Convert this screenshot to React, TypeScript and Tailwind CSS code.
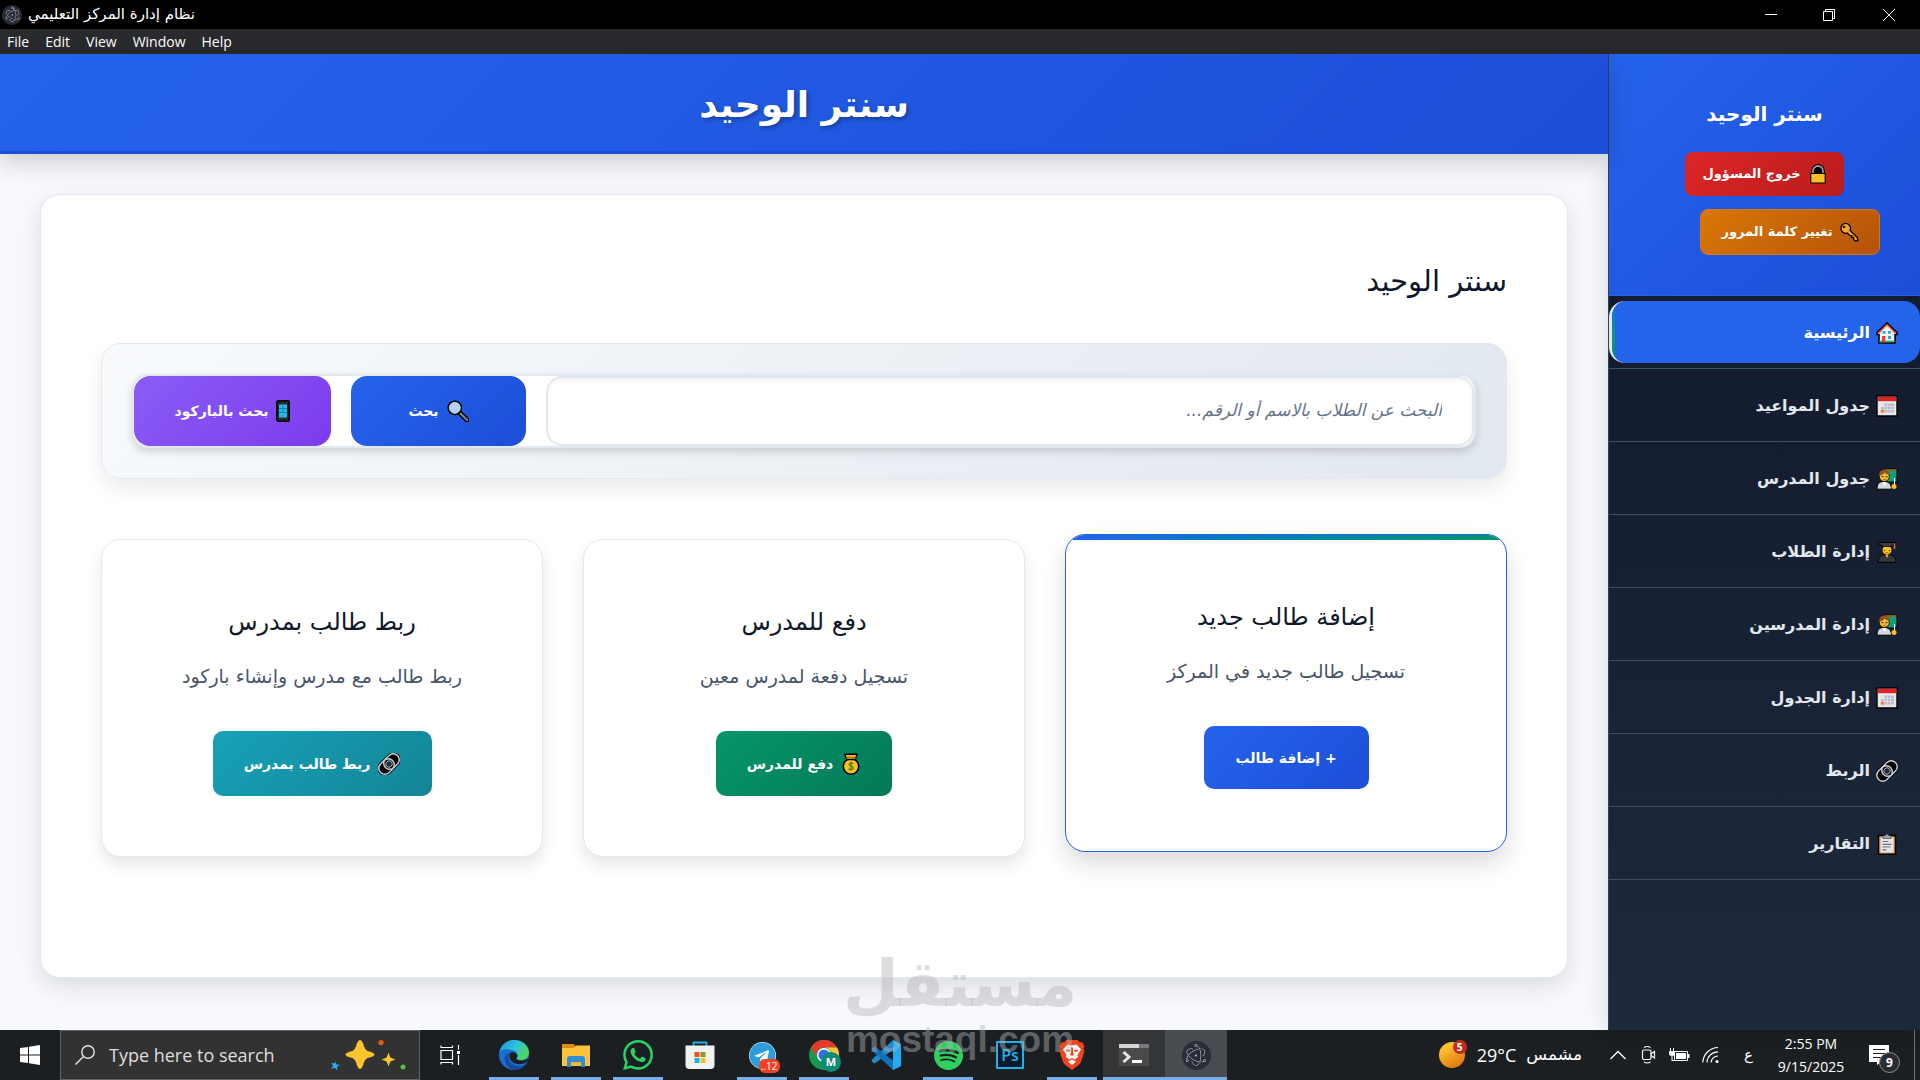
import { useState } from "react";
import type { ReactNode } from "react";
import { FaTelegram } from "react-icons/fa";
import { SiElectron, SiSpotify, SiWhatsapp } from "react-icons/si";

type IconProps = { className?: string };

const HouseIcon = ({ className }: IconProps) => (
  <svg viewBox="0 0 22 22" className={className}>
    <path d="M11 1 1 10.500v2h2V21h16v-8.500h2v-2z" fill="#f3f4f6" stroke="#000" strokeWidth="1.600" />
    <path d="M11 2.500 2.500 11M11 2.500 19.500 11" stroke="#e8432a" strokeWidth="1.600" fill="none" />
    <path d="M3.500 20h15v-1.500h-15z" fill="#22c55e" />
    <path d="M6 14h3.200v6H6z" fill="#e8432a" />
    <path d="M6.500 9h3v2.800h-3zM12 9h3v2.800h-3zM12 14h3v3h-3z" fill="#2ea8e0" />
  </svg>
);

const CalendarIcon = ({ className }: IconProps) => (
  <svg viewBox="0 0 22 22" className={className}>
    <path d="M1 1h20v20H1z" fill="#e5e7eb" stroke="#000" strokeWidth="1.400" />
    <path d="M1.700 1.700h18.600v4.500H1.700z" fill="#dc2626" />
    <path d="M8 8.500h10v9H5v-6h3z" fill="#b8bcc2" />
    <path d="M5 11.500h13M5 14.500h13M8 8.500v9M11.300 8.500v9M14.600 8.500v9" stroke="#e5e7eb" strokeWidth=".7" />
    <path d="M4.800 14.600h3v3h-3z" fill="#ea7a3c" />
  </svg>
);

const TeacherIcon = ({ className }: IconProps) => (
  <svg viewBox="0 0 22 22" className={className}>
    <path d="M10 1h11v13H10z" fill="#0f9f7d" stroke="#000" strokeWidth="1.200" />
    <path d="M9 2h11.500" stroke="#a16207" strokeWidth="1.600" />
    <path d="M1 21.200c0-5 2-7.700 7-7.700s7.500 3 7.500 7.700z" fill="#d4d7dc" stroke="#000" strokeWidth="1" />
    <path d="m6.500 14 2 4 2-4z" fill="#fff" />
    <circle cx="8.300" cy="8.500" r="5" fill="#fbbf24" stroke="#000" strokeWidth=".8" />
    <path d="M3.200 8C3 3 5.500 1.600 9 1.700c3 .2 4.500 2 4.500 4.800-2 0-4-.6-5-2C7.500 6.500 5.500 7 3.200 8z" fill="#92531f" />
    <path d="M5.500 8.600h2M9.500 8.600h2" stroke="#3f3f46" strokeWidth="1.300" />
    <path d="M7 11.300h3" stroke="#b45309" strokeWidth=".9" />
    <path d="M18.500 10v9" stroke="#fff" strokeWidth="1" />
    <circle cx="18" cy="18.500" r="2.500" fill="#fbbf24" />
  </svg>
);

const StudentIcon = ({ className }: IconProps) => (
  <svg viewBox="0 0 22 22" className={className}>
    <path d="M2 21.300c0-5 3-8 9-8s9 3 9 8z" fill="#383838" stroke="#000" strokeWidth="1" />
    <circle cx="11" cy="9" r="5" fill="#fbbf24" stroke="#000" strokeWidth=".8" />
    <path d="M9.500 13.500h3L11 17z" fill="#fbbf24" />
    <path d="M2.500 1.500h17V4H16v2c-3-1-7-1-10 0V4H2.500z" fill="#404040" stroke="#000" strokeWidth="1" />
    <path d="M18.500 2.500v5.500" stroke="#d9772b" strokeWidth="1.500" />
    <path d="M8.500 9v1M13.500 9v1" stroke="#222" strokeWidth="1.200" />
    <path d="M9.500 11.700h3" stroke="#b45309" strokeWidth=".9" />
  </svg>
);

const LinkIcon = ({ className }: IconProps) => (
  <svg viewBox="0 0 22 22" className={className}>
    <g transform="rotate(-45 11 11)">
      <rect x="-1" y="5" width="24" height="12" rx="6" fill="#000" stroke="#000" strokeWidth="3" />
      <rect x="-1" y="5" width="17" height="12" rx="6" fill="none" stroke="#c9cdd3" strokeWidth="1.500" />
      <rect x="6" y="5" width="17" height="12" rx="6" fill="none" stroke="#c9cdd3" strokeWidth="1.500" />
      <circle cx="11" cy="11" r="3.200" fill="#1e293b" stroke="#c9cdd3" strokeWidth=".8" />
    </g>
  </svg>
);

const ClipboardIcon = ({ className }: IconProps) => (
  <svg viewBox="0 0 22 22" className={className}>
    <path d="M2.500 2.500h17v18.700h-17z" fill="#d98b56" stroke="#000" strokeWidth="1.400" />
    <path d="M4.500 4.500h13v15h-13z" fill="#e5e7eb" />
    <path d="M7 5.500v-3h2.500a1.500 1.500 0 0 1 3 0H15v3z" fill="#9ca3af" stroke="#333" strokeWidth=".6" />
    <path d="M6.500 8.500h6M6.500 11.300h9M6.500 14h8M6.500 16.800h4" stroke="#6b7280" strokeWidth="1.200" />
  </svg>
);

const LockIcon = ({ className }: IconProps) => (
  <svg viewBox="0 0 20 22" className={className}>
    <path d="M4.500 11V7.500a5.500 5.500 0 0 1 11 0V11" fill="#000" stroke="#000" strokeWidth="4" />
    <path d="M4.500 11V7.500a5.500 5.500 0 0 1 11 0V11" fill="#000" stroke="#9ca3af" strokeWidth="1.800" />
    <path d="M2 10.500h16v10.500H2z" fill="#fbbf24" stroke="#000" strokeWidth="1.200" />
  </svg>
);

const KeyIcon = ({ className }: IconProps) => (
  <svg viewBox="0 0 22 22" className={className}>
    <path
      d="M7 1.500a5.500 5.500 0 1 0 2.300 10.700L12 15h2v2h2v2l1.500 1.700h3v-3L12.200 9.300A5.500 5.500 0 0 0 7 1.500z"
      fill="#f5a623"
      stroke="#000"
      strokeWidth="1.500"
    />
    <circle cx="5.500" cy="5.500" r="1.500" fill="#1f1300" />
  </svg>
);

const SearchIcon = ({ className }: IconProps) => (
  <svg viewBox="0 0 22 22" className={className}>
    <path d="m12.500 12.500 7.500 7.500" stroke="#000" strokeWidth="5" strokeLinecap="round" />
    <path d="m13.500 13.500 6.500 6.500" stroke="#7c8087" strokeWidth="2.400" strokeLinecap="round" />
    <circle cx="7.800" cy="7.800" r="6.500" fill="#a9cdf6" stroke="#000" strokeWidth="1.800" />
    <circle cx="7.800" cy="7.800" r="5.400" fill="none" stroke="#cbd5e1" strokeWidth="1" />
    <path d="m4.500 9 4.500-4.500M6.500 11 11 6.500" stroke="#dbeafe" strokeWidth="1" />
  </svg>
);

const PhoneIcon = ({ className }: IconProps) => (
  <svg viewBox="0 0 14 22" className={className}>
    <rect x=".8" y=".8" width="12.400" height="20.400" rx="1.500" fill="#27272a" stroke="#000" strokeWidth="1.400" />
    <path d="M3 4.500h8v13H3z" fill="#22b8e6" />
    <path d="M3 8.500h8M3 12.500h8M7 4.500v8" stroke="#0c7ea6" strokeWidth=".9" />
  </svg>
);

const MoneyIcon = ({ className }: IconProps) => (
  <svg viewBox="0 0 20 22" className={className}>
    <circle cx="10" cy="13.500" r="7.700" fill="#fbbf24" stroke="#000" strokeWidth="1.500" />
    <path d="M4 1.200h12l-1.500 5.300h-9z" fill="#fbbf24" stroke="#000" strokeWidth="1.400" />
    <path d="M4.500 4.300h11" stroke="#a85b12" strokeWidth="1.100" />
    <path
      d="M12.300 10.800c-.6-.9-4.300-1.300-4.300.8 0 2 4.400 1.400 4.400 3.500 0 2.200-4 1.800-4.800.6M10.100 8.800v9"
      stroke="#4d7c0f"
      strokeWidth="1.200"
      fill="none"
    />
  </svg>
);

const EdgeIcon = () => (
  <svg viewBox="0 0 30 30" className="size-[30px]">
    <defs>
      <linearGradient id="edge-top" x1="0" y1="0" x2="1" y2="0.500">
        <stop offset="0" stopColor="#1593d8" />
        <stop offset=".55" stopColor="#2fc1df" />
        <stop offset="1" stopColor="#4fd65f" />
      </linearGradient>
    </defs>
    <circle cx="15" cy="15" r="15" fill="#1b6fd0" />
    <path d="M.3 13C1.500 5 8 0 15 0c9 0 15 6 15 12.500 0 5-4 7.500-8 7.500-3 0-5-1-4.500-2.300 2-2.500.5-7.700-5.500-7.700C6 8.500 1.500 9.500.3 13z" fill="url(#edge-top)" />
    <path d="M11 13c-3.500 4-1 12 8 13 4 .4 7-1 8.500-3.300C25 28 20.500 30 15.500 30 9 29.500 4.500 22 6 17c1-3 3-4 5-4z" fill="#174a9c" />
    <path d="M11.500 12.500c-2.500 3.500-.5 10.500 6.500 11.500 5 .6 8.500-1 9.800-2.300.7-.5 1 .1.700.6-1.500 2.500-.5.500 1.500-4.300-3 2.500-9.500 3.500-12.300 1.500-1.200-.9.800-1.500.8-3.500 0-2-2.500-4.500-7-3.500z" fill="#1b1f22" />
  </svg>
);

const FolderIcon = () => (
  <svg viewBox="0 0 28 24" className="w-7 h-6">
    <path d="M0 1h12l2 3v5H0z" fill="#d98a0f" />
    <path d="M0 5h12l2-2.500h14V23H0z" fill="#fcc43c" />
    <path d="M5 24v-8q0-3 3-3h12q3 0 3 3v8h-4v-5H9v5z" fill="#2f8fd6" />
    <path d="M9 19h10v3H9z" fill="#f4b62c" />
  </svg>
);

const StoreIcon = () => (
  <svg viewBox="0 0 30 30" className="size-[30px]">
    <path d="M8.500 7V2.500h13V7" fill="none" stroke="#1fb2e8" strokeWidth="1.800" />
    <path d="M.5 5.500h29V25q0 4-4 4h-21q-4 0-4-4z" fill="#f1f1f1" />
    <path d="M9.500 12h5v5h-5z" fill="#f04e23" />
    <path d="M15.500 12h5v5h-5z" fill="#8f9a26" />
    <path d="M9.500 18h5v5h-5z" fill="#1fb2e8" />
    <path d="M15.500 18h5v5h-5z" fill="#fcc221" />
  </svg>
);

const ChromeIcon = () => (
  <svg viewBox="0 0 30 30" className="size-[30px]">
    <circle cx="15" cy="15" r="15" fill="#139a52" />
    <path d="M2 7.500A15 15 0 0 1 28 7.500H15A7.500 7.500 0 0 0 8.500 18.700z" fill="#e5392a" />
    <path d="M28 7.500A15 15 0 0 1 15 30l6.500-11.300A7.500 7.500 0 0 0 15 7.500z" fill="#fcc62f" />
    <circle cx="15" cy="15" r="7" fill="#fff" />
    <circle cx="15" cy="15" r="5.600" fill="#2f73e8" />
  </svg>
);

const VsCodeIcon = () => (
  <svg viewBox="0 0 30 30" className="size-[30px]">
    <path d="M22 0 1 19.500q-1 1 0 2l1.500 1.500q1 .8 2 0L22 9.500z" fill="#2489ca" />
    <path d="M22 30 1 10.500q-1-1 0-2L2.500 7q1-.8 2 0L22 20.500z" fill="#1070b3" />
    <path d="M22 0l7 3.200q1 .6 1 1.600v20.400q0 1-1 1.600L22 30z" fill="#24aaf0" />
  </svg>
);

const PhotoshopIcon = () => (
  <span className="flex size-7 items-center justify-center border-2 border-[#1fb2e8] bg-[#0a1a2c] font-['Open_Sans',sans-serif] text-base font-semibold text-[#1fb2e8]">
    Ps
  </span>
);

const BraveIcon = () => (
  <svg viewBox="0 0 26 30" className="h-[30px] w-[26px]">
    <path d="M7.500 0h11l2.500 2.500L23 2l2.500 4-1 2.500L25.500 11 22 22q-.8 2-2.500 3L13 30l-6.500-5q-1.700-1-2.500-3L.5 11l1-2.500L.5 6 3 2l2 .5z" fill="#f4441e" />
    <path d="M9 4.500 13 5.500l4-1 2 1.500 3 3.500-3.500 5.500.5 2-3.500 2.500L13 18l-2.500 1.500L7 17l.5-2L4 9.500 7 6z" fill="#fff" />
    <path d="M13 19.500l4 2.200-4 3.300-4-3.300z" fill="#fff" />
    <path d="M6.500 9.500 11 10l-.5 2-2.500-.5zM19.500 9.500 15 10l.5 2 2.500-.5zM12 7l1 1 1-1v6l1.500 1-2.500 2-2.500-2L12 13z" fill="#f4441e" />
  </svg>
);

const TerminalIcon = () => (
  <svg viewBox="0 0 30 24" className="w-[30px] h-6">
    <path d="M0 1h30v22H0z" fill="#494a4c" />
    <path d="M0 1h20v4H0z" fill="#d4d4d4" />
    <path d="M20 1h10v4H20z" fill="#77797c" />
    <path d="m4.500 9 5.500 5-5.500 5" fill="none" stroke="#e5e5e5" strokeWidth="3" />
    <path d="M13 18.500h10" stroke="#fff" strokeWidth="3" />
  </svg>
);

const ElectronBadge = ({ className }: IconProps) => (
  <span className={`flex items-center justify-center rounded-full bg-[#292d38] text-[#c5ccd3] ${className}`}>
    <SiElectron className="size-3/4" />
  </span>
);

const navItems = [
  { label: "الرئيسية", Icon: HouseIcon },
  { label: "جدول المواعيد", Icon: CalendarIcon },
  { label: "جدول المدرس", Icon: TeacherIcon },
  { label: "إدارة الطلاب", Icon: StudentIcon },
  { label: "إدارة المدرسين", Icon: TeacherIcon },
  { label: "إدارة الجدول", Icon: CalendarIcon },
  { label: "الربط", Icon: LinkIcon },
  { label: "التقارير", Icon: ClipboardIcon },
];

const TitleBar = () => (
  <div className="flex h-[29px] items-center justify-between bg-black text-white">
    <div className="flex items-center gap-1.5 pl-0.5">
      <ElectronBadge className="size-5" />
      <span dir="rtl" className="text-[15px]">نظام إدارة المركز التعليمي</span>
    </div>
    <div className="flex h-full pr-1">
      <button aria-label="Minimize" className="flex w-[58px] items-center justify-center">
        <svg viewBox="0 0 12 12" className="size-3"><path d="M0 5.500h12" stroke="#fff" /></svg>
      </button>
      <button aria-label="Restore" className="flex w-[58px] items-center justify-center">
        <svg viewBox="0 0 12 12" className="size-3" fill="none" stroke="#fff">
          <path d="M.5 2.500h9v9h-9zM2.500 2.500v-2h9v9h-2" />
        </svg>
      </button>
      <button aria-label="Close" className="flex w-[58px] items-center justify-center pl-1">
        <svg viewBox="0 0 12 12" className="size-3"><path d="m0 0 12 12M12 0 0 12" stroke="#fff" /></svg>
      </button>
    </div>
  </div>
);

const MenuBar = () => (
  <div className="flex h-[25px] items-center gap-4 bg-[#292a2d] pl-[7px] font-['Open_Sans',sans-serif] text-sm text-white">
    {["File", "Edit", "View", "Window", "Help"].map((name) => (
      <button key={name}>{name}</button>
    ))}
  </div>
);

const Sidebar = () => {
  const [active, setActive] = useState(0);

  return (
    <aside className="relative z-10 flex w-[312px] shrink-0 flex-col border-l border-[#334155] bg-linear-to-b from-[#0f172a] to-[#1e293b] shadow-[-4px_0_20px_rgba(0,0,0,0.1)]">
      <div className="flex flex-col items-center border-b border-[#2563eb] bg-linear-135 from-[#2563eb] to-[#1d4ed8] px-10 pt-9 pb-10 text-white">
        <h2 className="text-xl leading-12 font-bold">سنتر الوحيد</h2>
        <button className="mt-3.5 flex h-11 w-[159px] items-center justify-center gap-2 rounded-lg bg-linear-135 from-[#dc2626] to-[#b91c1c] text-[13px] font-bold">
          <LockIcon className="h-5 w-[18px]" />
          خروج المسؤول
        </button>
        <button className="mt-[13px] flex h-[46px] w-[180px] items-center justify-center gap-1.5 self-start rounded-lg border border-[#d97706] bg-linear-135 from-[#d97706] to-[#b45309] text-[13px] font-bold">
          <KeyIcon className="size-5" />
          تغيير كلمة المرور
        </button>
      </div>
      <nav>
        {navItems.map(({ label, Icon }, i) => (
          <div key={label} className="flex h-[73px] flex-col border-b border-[#3a5068] py-[5px]">
            <a
              href="#"
              onClick={() => setActive(i)}
              className={
                i === active
                  ? "relative flex flex-1 items-center gap-1.5 overflow-hidden rounded-2xl border-l-3 border-[#e2e8f0] bg-[#2563eb] pt-0.5 pr-[22px] text-base font-bold text-white"
                  : "flex flex-1 items-center gap-1.5 pt-0.5 pr-[22px] text-base font-bold text-[#e2e8f0]"
              }
            >
              {i === active && (
                <span className="absolute inset-y-0 left-0 w-[3px] bg-linear-to-b from-[#2563eb] via-[#0d9488] to-[#059669]" />
              )}
              <Icon className="size-[22px]" />
              {label}
            </a>
          </div>
        ))}
      </nav>
    </aside>
  );
};

const SearchForm = () => {
  const [query, setQuery] = useState("");

  return (
    <div className="rounded-[20px] border border-[#e2e8f0] bg-linear-135 from-[#f8fafc] to-[#e2e8f0] p-[30px] shadow-[0_10px_20px_rgba(0,0,0,0.08)]">
      <form
        onSubmit={(e) => e.preventDefault()}
        className="flex h-[74px] gap-5 rounded-2xl border-2 border-[#e2e8f0] bg-white shadow-[0_4px_8px_rgba(0,0,0,0.15)]"
      >
        <input
          type="text"
          aria-label="البحث عن الطلاب"
          placeholder="البحث عن الطلاب بالاسم أو الرقم..."
          value={query}
          onChange={(e) => setQuery(e.target.value)}
          className="min-w-0 flex-1 rounded-2xl border-2 border-[#e2e8f0] bg-white px-[30px] text-[17px] shadow-[inset_0_2px_4px_rgba(0,0,0,0.06)] outline-none placeholder:text-[#64748b] placeholder:italic"
        />
        <button
          type="submit"
          className="flex w-[175px] items-center justify-center gap-2 rounded-2xl bg-linear-135 from-[#2563eb] to-[#1d4ed8] text-sm font-bold text-white"
        >
          <SearchIcon className="size-[22px]" />
          بحث
        </button>
        <button
          type="button"
          className="flex w-[197px] items-center justify-center gap-2 rounded-2xl bg-linear-135 from-[#8b5cf6] to-[#7c3aed] text-sm font-bold text-white"
        >
          <PhoneIcon className="h-[22px] w-3.5" />
          بحث بالباركود
        </button>
      </form>
    </div>
  );
};

type CardProps = {
  title: string;
  text: string;
  className: string;
  children: ReactNode;
};

const ActionCard = ({ title, text, className, children }: CardProps) => (
  <div className={`flex flex-col items-center rounded-[20px] border bg-white py-15 ${className}`}>
    <h3 className="text-2xl leading-11 text-[#0f172a]">{title}</h3>
    <p className="mt-3.5 mb-[37px] text-[19px] leading-9 text-[#475569]">{text}</p>
    {children}
  </div>
);

const Dashboard = () => (
  <div className="flex min-w-0 flex-1 flex-col bg-[#f8f9fd]">
    <header className="relative z-10 flex h-[100px] items-center justify-center border-b-3 border-[#1d4ed8] bg-linear-135 from-[#2563eb] to-[#1d4ed8] pt-1 shadow-[0_8px_24px_rgba(0,0,0,0.18)]">
      <h1 className="text-4xl font-bold text-white text-shadow-[2px_2px_4px_rgba(0,0,0,0.3)]">سنتر الوحيد</h1>
    </header>
    <main className="flex flex-1 flex-col p-10 pb-13">
      <section className="flex-1 rounded-[20px] border border-[#e2e8f0] bg-white px-15 pt-15 pb-30 shadow-[0_8px_24px_rgba(0,0,0,0.12)]">
        <h2 className="mb-9 text-[29px] leading-13 text-[#0f172a]">سنتر الوحيد</h2>
        <SearchForm />
        <div className="mt-15 grid grid-cols-3 gap-10">
          <ActionCard
            title="إضافة طالب جديد"
            text="تسجيل طالب جديد في المركز"
            className="relative -translate-y-[5px] overflow-hidden border-[#2563eb] shadow-[0_12px_24px_rgba(0,0,0,0.14)] before:absolute before:inset-x-0 before:top-0 before:h-[5px] before:bg-linear-to-r before:from-[#2563eb] before:to-[#059669]"
          >
            <button className="h-[63px] w-[165px] rounded-[10px] bg-linear-135 from-[#2563eb] to-[#1d4ed8] text-sm font-bold text-white">
              + إضافة طالب
            </button>
          </ActionCard>
          <ActionCard
            title="دفع للمدرس"
            text="تسجيل دفعة لمدرس معين"
            className="border-[#e2e8f0] shadow-[0_8px_16px_rgba(0,0,0,0.1)]"
          >
            <button className="flex h-[65px] w-[176px] items-center justify-center gap-2 rounded-[10px] bg-linear-135 from-[#059669] to-[#047857] text-sm font-bold text-white">
              <MoneyIcon className="h-[22px] w-5" />
              دفع للمدرس
            </button>
          </ActionCard>
          <ActionCard
            title="ربط طالب بمدرس"
            text="ربط طالب مع مدرس وإنشاء باركود"
            className="border-[#e2e8f0] shadow-[0_8px_16px_rgba(0,0,0,0.1)]"
          >
            <button className="flex h-[65px] w-[219px] items-center justify-center gap-2 rounded-[10px] bg-linear-135 from-[#17a2b8] to-[#138496] text-sm font-bold text-white">
              <LinkIcon className="size-[22px]" />
              ربط طالب بمدرس
            </button>
          </ActionCard>
        </div>
      </section>
    </main>
  </div>
);

const taskbarApps: { name: string; icon: ReactNode; running?: boolean; cell?: string }[] = [
  { name: "Edge", icon: <EdgeIcon />, running: true },
  { name: "File Explorer", icon: <FolderIcon />, running: true },
  { name: "WhatsApp", icon: <SiWhatsapp className="size-[30px] text-[#25d366]" />, running: true },
  { name: "Store", icon: <StoreIcon /> },
  {
    name: "Telegram",
    icon: (
      <span className="relative">
        <FaTelegram className="size-[27px] rounded-full bg-white text-[#2a9fdc]" />
        <span className="absolute -right-1 -bottom-1 rounded-md bg-[#f04124] px-0.5 text-[10px] leading-[14px] text-white">..12</span>
      </span>
    ),
    running: true,
  },
  {
    name: "Chrome",
    icon: (
      <span className="relative">
        <ChromeIcon />
        <span className="absolute -right-0.5 -bottom-0.5 flex size-5 items-center justify-center rounded-full bg-[#0f8a74] text-[11px] font-bold text-white">M</span>
      </span>
    ),
    running: true,
  },
  { name: "VS Code", icon: <VsCodeIcon /> },
  { name: "Spotify", icon: <SiSpotify className="size-[29px] text-[#2ed15f]" />, running: true },
  { name: "Photoshop", icon: <PhotoshopIcon /> },
  { name: "Brave", icon: <BraveIcon />, running: true },
  { name: "Terminal", icon: <TerminalIcon />, running: true, cell: "bg-[#333536]" },
  { name: "Electron", icon: <ElectronBadge className="size-[29px]" />, running: true, cell: "bg-[#484c50]" },
];

const Taskbar = () => (
  <footer className="flex h-[50px] items-stretch bg-[#1b1f22] font-['Open_Sans',sans-serif] text-white">
    <button aria-label="Start" className="flex w-15 items-center justify-center">
      <svg viewBox="0 0 20 20" className="size-5" fill="#fff">
        <path d="M0 3l8-1v7.500H0zM9 1.800 20 0v9.500H9zM0 10.500h8V18l-8-1zM9 10.500h11V20L9 18.300z" />
      </svg>
    </button>
    <div className="flex w-[360px] items-center border border-[#606468] bg-[#323232] pl-3.5">
      <svg viewBox="0 0 20 20" className="size-5" fill="none" stroke="#e5e5e5" strokeWidth="1.400">
        <circle cx="13" cy="7" r="6.200" />
        <path d="M8.500 11.500.5 19.500" />
      </svg>
      <input
        type="text"
        aria-label="Search"
        placeholder="Type here to search"
        className="ml-3.5 w-[200px] text-lg outline-none placeholder:text-[#dedede]"
      />
      <svg viewBox="0 0 76 32" className="ml-[21px] h-8 w-[76px]">
        <path d="M30 1q2.500 0 4 6.500 1 3 3.500 4.500 7 1.500 7 3.500t-7 3.500q-2.500 1.500-3.500 4Q32.500 30 30 30t-4-7q-1-2.500-3.500-4-7-1.500-7-3.500t7-3.500Q25 10.500 26 7.500 27.500 1 30 1z" fill="#fcc42f" />
        <path d="M58.500 13.500q1.500 4.500 2 5 .5.600 5 2-4.500 1.500-5 2-.5.500-2 5-1.500-4.500-2-5-.5-.5-5-2 4.500-1.400 5-2 .5-.5 2-5z" fill="#fcc42f" />
        <path d="M5 21.500q1 3.500 1.500 4 .5.300 4 .2-3 1.500-3.300 2-.4.800.2 4-2-2.500-2.500-2.700-.8 0-4 1 2-2.500 2-3.300-.1-.5-1.500-3 3 .9 3.500.6.300-.4.100-2.800z" fill="#22b1f0" />
        <circle cx="51" cy="3.500" r="2.600" fill="#e8590c" />
        <circle cx="73" cy="28" r="2.500" fill="#57c04a" />
      </svg>
    </div>
    <button aria-label="Task View" className="flex w-[63px] items-center justify-center pr-1">
      <svg viewBox="0 0 20 20" className="size-5" fill="none" stroke="#fff" strokeWidth="1.200">
        <path d="M1 5.500h11.500v9H1zM1 .5v2h11.500v-2M1 19.500v-2h11.500v2M18.500 0v4.500M18.500 10v10" />
        <path d="M17 6h3v3h-3z" fill="#fff" stroke="none" />
      </svg>
    </button>
    {taskbarApps.map(({ name, icon, running, cell }) => (
      <button key={name} aria-label={name} className={`relative flex w-[62px] items-center justify-center ${cell ?? ""}`}>
        {icon}
        {running && (
          <span className={cell ? "absolute inset-x-0 bottom-0 h-[3px] bg-[#76adeb]" : "absolute inset-x-1.5 bottom-0 h-[3px] bg-[#76adeb]"} />
        )}
      </button>
    ))}

    <div className="ml-auto flex items-center pr-[5px]">
      <span className="relative mr-3 flex">
        <svg viewBox="0 0 26 26" className="size-[26px]">
          <defs>
            <linearGradient id="sun" x1="0" y1="0" x2=".6" y2="1">
              <stop offset=".3" stopColor="#fbc02d" />
              <stop offset="1" stopColor="#e07a10" />
            </linearGradient>
          </defs>
          <circle cx="13" cy="13" r="13" fill="url(#sun)" />
        </svg>
        <span className="absolute -top-0.5 -right-0.5 flex size-3.5 items-center justify-center rounded-full bg-[#c42b1c] text-[10px] font-bold">5</span>
      </span>
      <span className="mr-2.5 text-lg">29°C</span>
      <span className="mr-7 font-['DejaVu_Sans',sans-serif] text-[17px]">مشمس</span>
      <svg viewBox="0 0 16 10" className="mr-[15px] h-2.5 w-4" fill="none" stroke="#fff" strokeWidth="1.300">
        <path d="m.5 9 7.500-7.500L15.500 9" />
      </svg>
      <svg viewBox="0 0 16 20" className="mr-3 h-5 w-4" fill="none" stroke="#fff" strokeWidth="1.200">
        <rect x="1.500" y="5" width="8.500" height="9.500" rx="1.500" />
        <path d="M10 9l3.500-2.500v6.500L10 10.500M3 2.500q3-2 6.500 0M3 17q3 2 6.500 0" />
      </svg>
      <svg viewBox="0 0 21 14" className="mr-3 h-3.5 w-[21px]">
        <path d="M5.500 3.500h13v9h-13z" fill="none" stroke="#fff" />
        <path d="M7 5h10v6H7zM19 6h1.500v4H19zM0 3h6v2.500Q6 8 3 8T0 5.500zM1 0h1v3H1zM4 0h1v3H4zM2.500 7.500h1V12h3v1h-4z" fill="#fff" />
      </svg>
      <svg viewBox="0 0 18 18" className="mr-6 size-[18px]" fill="none" stroke="#fff" strokeWidth="1.200">
        <path d="M.8 16.500A15.500 15.500 0 0 1 16 1.500M5 16.500A11 11 0 0 1 16 5.800M9 16.500a7 7 0 0 1 7-6.500" />
        <circle cx="15" cy="15.500" r="1.500" fill="#fff" stroke="none" />
      </svg>
      <span className="mr-5 font-['DejaVu_Sans',sans-serif] text-[15px]">ع</span>
      <div className="mr-5 w-[76px] text-center text-sm leading-[23px] whitespace-nowrap">
        <div>2:55 PM</div>
        <div>9/15/2025</div>
      </div>
      <button aria-label="Notifications" className="relative mr-[14px] h-9 w-[31px]">
        <svg viewBox="0 0 20 20" className="size-5">
          <path d="M0 0h20v17h-8l-4 3v-3H0z" fill="#fff" />
          <path d="M4 4.500h12M4 8.500h12M4 12.500h8" stroke="#1b1f22" strokeWidth="1.200" />
        </svg>
        <span className="absolute right-0 bottom-0 flex size-[21px] items-center justify-center rounded-full border border-[#8b8f94] bg-[#2a2e32] text-xs font-bold">9</span>
      </button>
      <span className="h-full w-px bg-[#6b7280]" />
    </div>
  </footer>
);

export default function App() {
  return (
    <div className="relative flex min-h-screen flex-col font-['DejaVu_Sans',sans-serif]">
      <TitleBar />
      <MenuBar />
      <div dir="rtl" className="flex flex-1">
        <Sidebar />
        <Dashboard />
      </div>
      <Taskbar />
      <div className="pointer-events-none absolute inset-x-0 bottom-6 z-20 flex flex-col items-center font-bold text-[#b5b6b9]/45">
        <span className="text-[64px] leading-[80px]">مستقل</span>
        <span className="font-['Liberation_Sans',sans-serif] text-[37px] leading-8">mostaql.com</span>
      </div>
    </div>
  );
}
